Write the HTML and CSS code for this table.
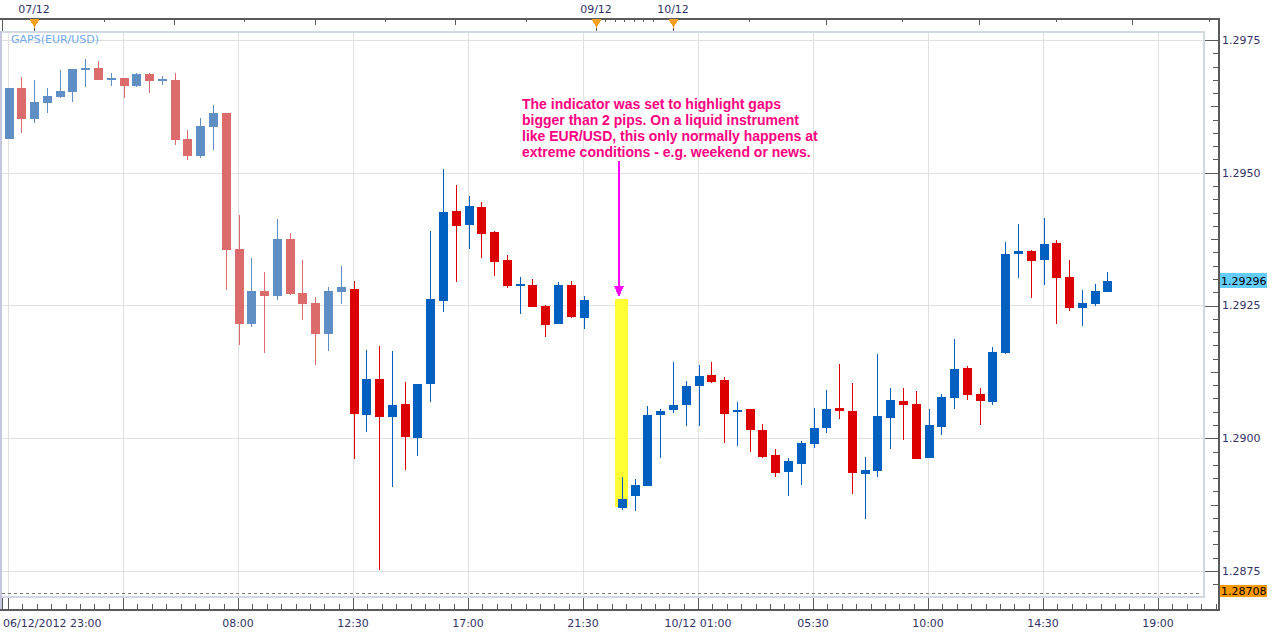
FILE: index.html
```html
<!DOCTYPE html>
<html lang="en">
<head>
<meta charset="utf-8">
<title>GAPS(EUR/USD)</title>
<link rel="stylesheet" href="styles.css">
</head>
<body>
<div class="chart">
  <svg class="top-axis" width="1275" height="31" viewBox="0 0 1275 31" shape-rendering="crispEdges">
    <rect x="0" y="18" width="1220" height="2" fill="#5a5a5a"/>
    <rect x="2" y="18" width="1" height="13" fill="#5a5a5a"/>
    <rect x="1218" y="18" width="2" height="13" fill="#5a5a5a"/>
    <g fill="#5a5a5a">
      <rect x="174" y="20" width="1" height="5"/>
      <rect x="315" y="20" width="1" height="5"/>
      <rect x="455" y="20" width="1" height="5"/>
      <rect x="826" y="20" width="1" height="5"/>
      <rect x="979" y="20" width="1" height="5"/>
      <rect x="1132" y="20" width="1" height="5"/>
      <rect x="104" y="20" width="1" height="2"/>
      <rect x="244" y="20" width="1" height="2"/>
      <rect x="385" y="20" width="1" height="2"/>
      <rect x="526" y="20" width="1" height="2"/>
      <rect x="605" y="20" width="1" height="2"/>
      <rect x="615" y="20" width="1" height="2"/>
      <rect x="624" y="20" width="1" height="2"/>
      <rect x="634" y="20" width="1" height="2"/>
      <rect x="643" y="20" width="1" height="2"/>
      <rect x="653" y="20" width="1" height="2"/>
      <rect x="749" y="20" width="1" height="2"/>
      <rect x="902" y="20" width="1" height="2"/>
      <rect x="1056" y="20" width="1" height="2"/>
      <rect x="1209" y="20" width="1" height="2"/>
      <rect x="34" y="20" width="1" height="11"/>
      <rect x="596" y="20" width="1" height="11"/>
      <rect x="673" y="20" width="1" height="11"/>
    </g>
    <g class="marker">
      <polygon points="29.5,19 39.5,19 34.5,28"/>
      <polygon points="591.5,19 601.5,19 596.5,28"/>
      <polygon points="668.5,19 678.5,19 673.5,28"/>
    </g>
    <text class="axis-label" x="34" y="13" text-anchor="middle">07/12</text>
    <text class="axis-label" x="596" y="13" text-anchor="middle">09/12</text>
    <text class="axis-label" x="673" y="13" text-anchor="middle">10/12</text>
  </svg>

  <div class="middle">
    <div class="plot">
      <svg id="plot" width="1205" height="567" viewBox="0 31 1205 567" shape-rendering="crispEdges">
        <rect x="0" y="31" width="1205" height="567" fill="#ffffff"/>
        <g fill="#e1e1e1">
          <rect x="2" y="40" width="1201" height="1"/>
          <rect x="2" y="173" width="1201" height="1"/>
          <rect x="2" y="305" width="1201" height="1"/>
          <rect x="2" y="438" width="1201" height="1"/>
          <rect x="2" y="571" width="1201" height="1"/>
          <rect x="8" y="33" width="1" height="563"/>
          <rect x="123" y="33" width="1" height="563"/>
          <rect x="238" y="33" width="1" height="563"/>
          <rect x="353" y="33" width="1" height="563"/>
          <rect x="468" y="33" width="1" height="563"/>
          <rect x="583" y="33" width="1" height="563"/>
          <rect x="698" y="33" width="1" height="563"/>
          <rect x="813" y="33" width="1" height="563"/>
          <rect x="928" y="33" width="1" height="563"/>
          <rect x="1043" y="33" width="1" height="563"/>
          <rect x="1158" y="33" width="1" height="563"/>
        </g>
        <line x1="2" y1="593.5" x2="1200" y2="593.5" stroke="#7a7a7a" stroke-width="1" stroke-dasharray="3 3"/>
        <g fill="#d3d9e2">
          <rect x="0" y="31" width="1205" height="2"/>
          <rect x="1203" y="31" width="2" height="567"/>
          <rect x="0" y="596" width="1205" height="2"/>
        </g>
        <rect x="0" y="31" width="2" height="567" fill="#c6c6de"/>
        <text class="legend" x="11" y="43">GAPS(EUR/USD)</text>
        <rect x="615" y="299" width="13" height="208" fill="#ffff33"/>
        <g id="candles"></g>
        <rect x="618" y="161" width="2" height="127" fill="#ff00ff"/>
        <polygon points="614,286 624,286 619,297" fill="#ff00ff"/>
      </svg>
      <p class="note">The indicator was set to highlight gaps<br>bigger than 2 pips. On a liquid instrument<br>like EUR/USD, this only normally happens at<br>extreme conditions - e.g. weekend or news.</p>
    </div>

    <svg id="price" width="70" height="567" viewBox="1205 31 70 567" shape-rendering="crispEdges">
      <rect x="1218" y="31" width="2" height="567" fill="#5a5a5a"/>
      <g id="price-ticks" fill="#5a5a5a"></g>
      <text class="axis-label" x="1222" y="44">1.2975</text>
      <text class="axis-label" x="1222" y="177">1.2950</text>
      <text class="axis-label" x="1222" y="309">1.2925</text>
      <text class="axis-label" x="1222" y="442">1.2900</text>
      <text class="axis-label" x="1222" y="575">1.2875</text>
      <rect x="1220" y="273" width="47" height="15" fill="#66ccff"/>
      <text class="axis-label tag-text" x="1221" y="285">1.29296</text>
      <rect x="1220" y="585" width="47" height="12" fill="#ff9900"/>
      <text class="axis-label tag-text" x="1221" y="595">1.28708</text>
    </svg>
  </div>

  <svg id="time" width="1275" height="36" viewBox="0 598 1275 36" shape-rendering="crispEdges">
    <rect x="0" y="598" width="2" height="12" fill="#c6c6de"/>
    <rect x="0" y="609" width="1220" height="2" fill="#5a5a5a"/>
    <rect x="1218" y="598" width="2" height="13" fill="#5a5a5a"/>
    <g id="time-ticks" fill="#5a5a5a"></g>
    <text class="axis-label" x="3" y="627">06/12/2012 23:00</text>
    <text class="axis-label" x="238" y="627" text-anchor="middle">08:00</text>
    <text class="axis-label" x="353" y="627" text-anchor="middle">12:30</text>
    <text class="axis-label" x="468" y="627" text-anchor="middle">17:00</text>
    <text class="axis-label" x="583" y="627" text-anchor="middle">21:30</text>
    <text class="axis-label" x="698" y="627" text-anchor="middle">10/12 01:00</text>
    <text class="axis-label" x="813" y="627" text-anchor="middle">05:30</text>
    <text class="axis-label" x="928" y="627" text-anchor="middle">10:00</text>
    <text class="axis-label" x="1043" y="627" text-anchor="middle">14:30</text>
    <text class="axis-label" x="1158" y="627" text-anchor="middle">19:00</text>
  </svg>
</div>
<script src="script.js"></script>
</body>
</html>
```

FILE: styles.css
```css
html, body {
  margin: 0;
  padding: 0;
  background: #ffffff;
}

body {
  width: 1275px;
  height: 634px;
  overflow: hidden;
  font-family: "DejaVu Sans", sans-serif;
}

.chart {
  display: flex;
  flex-direction: column;
  width: 1275px;
  height: 634px;
}

.chart svg {
  display: block;
  flex: none;
}

.middle {
  display: flex;
  height: 567px;
}

.plot {
  position: relative;
  width: 1205px;
  height: 567px;
  flex: none;
}

.note {
  position: absolute;
  left: 522px;
  top: 65px;
  margin: 0;
  font-family: "Liberation Sans", Arial, sans-serif;
  font-weight: bold;
  font-size: 14px;
  line-height: 16px;
  color: #ff0080;
  white-space: nowrap;
}

.axis-label {
  font-family: "DejaVu Sans", sans-serif;
  font-size: 11px;
  fill: #333366;
}

.tag-text {
  fill: #000000;
}

.legend {
  font-family: "DejaVu Sans", sans-serif;
  font-size: 11px;
  fill: #72aaee;
}

.marker polygon {
  fill: #f5a020;
}
```

FILE: script.js
```js
(function () {
  var NS = 'http://www.w3.org/2000/svg';

  function rect(parent, x, y, w, h, fill) {
    var r = document.createElementNS(NS, 'rect');
    r.setAttribute('x', x);
    r.setAttribute('y', y);
    r.setAttribute('width', w);
    r.setAttribute('height', h);
    if (fill) { r.setAttribute('fill', fill); }
    parent.appendChild(r);
    return r;
  }

  var colors = { fb: '#5f8fc4', fr: '#dc6c6c', b: '#0060c0', r: '#dd0000' };

  // [bodyLeft, bodyTop, bodyBottom, wickTop, wickBottom, colour]
  var data = [
    [5, 88, 139, 88, 139, 'fb'],
    [17, 88, 119, 77, 133, 'fr'],
    [30, 102, 119, 80, 123, 'fb'],
    [43, 96, 103, 88, 113, 'fb'],
    [56, 91, 97, 70, 98, 'fb'],
    [68, 69, 92, 69, 102, 'fb'],
    [81, 68, 70, 59, 87, 'fb'],
    [94, 68, 80, 61, 80, 'fr'],
    [107, 78, 80, 73, 86, 'fb'],
    [120, 78, 86, 78, 98, 'fr'],
    [132, 74, 86, 73, 87, 'fb'],
    [145, 74, 81, 73, 93, 'fr'],
    [158, 79, 81, 76, 85, 'fb'],
    [171, 80, 140, 73, 145, 'fr'],
    [183, 139, 156, 130, 160, 'fr'],
    [196, 126, 156, 118, 158, 'fb'],
    [209, 113, 127, 105, 150, 'fb'],
    [222, 113, 250, 113, 290, 'fr'],
    [235, 249, 324, 215, 345, 'fr'],
    [247, 291, 324, 258, 327, 'fb'],
    [260, 291, 296, 272, 353, 'fr'],
    [273, 239, 296, 219, 300, 'fb'],
    [286, 239, 294, 233, 295, 'fr'],
    [298, 293, 304, 260, 320, 'fr'],
    [311, 303, 334, 297, 365, 'fr'],
    [324, 291, 334, 287, 351, 'fb'],
    [337, 287, 292, 266, 304, 'fb'],
    [350, 289, 414, 281, 459, 'r'],
    [362, 379, 415, 350, 432, 'b'],
    [375, 379, 417, 346, 570, 'r'],
    [388, 405, 417, 351, 487, 'b'],
    [401, 404, 437, 382, 470, 'r'],
    [413, 384, 438, 384, 456, 'b'],
    [426, 299, 384, 231, 402, 'b'],
    [439, 212, 301, 169, 312, 'b'],
    [452, 211, 226, 185, 282, 'r'],
    [465, 206, 225, 196, 249, 'b'],
    [477, 207, 234, 202, 258, 'r'],
    [490, 232, 262, 231, 276, 'r'],
    [503, 260, 286, 255, 288, 'r'],
    [516, 284, 286, 277, 314, 'b'],
    [528, 285, 307, 279, 307, 'r'],
    [541, 306, 325, 305, 337, 'r'],
    [554, 285, 324, 282, 324, 'b'],
    [567, 285, 317, 281, 318, 'r'],
    [580, 300, 318, 296, 329, 'b'],
    [618, 499, 508, 477, 510, 'b'],
    [631, 485, 496, 479, 511, 'b'],
    [643, 415, 486, 406, 486, 'b'],
    [656, 411, 415, 409, 458, 'b'],
    [669, 405, 410, 362, 413, 'b'],
    [682, 386, 405, 381, 426, 'b'],
    [695, 376, 386, 365, 426, 'b'],
    [707, 375, 382, 362, 383, 'r'],
    [720, 380, 414, 377, 443, 'r'],
    [733, 410, 412, 402, 446, 'b'],
    [746, 409, 430, 409, 452, 'r'],
    [758, 430, 457, 424, 458, 'r'],
    [771, 455, 473, 449, 477, 'r'],
    [784, 461, 472, 458, 496, 'b'],
    [797, 443, 464, 441, 485, 'b'],
    [810, 428, 444, 408, 448, 'b'],
    [822, 409, 428, 390, 433, 'b'],
    [835, 408, 411, 364, 419, 'r'],
    [848, 411, 473, 383, 494, 'r'],
    [861, 470, 474, 457, 519, 'b'],
    [873, 416, 471, 354, 477, 'b'],
    [886, 400, 418, 388, 449, 'b'],
    [899, 401, 405, 388, 440, 'r'],
    [912, 404, 459, 391, 459, 'r'],
    [925, 425, 458, 409, 458, 'b'],
    [937, 397, 427, 394, 435, 'b'],
    [950, 369, 398, 339, 409, 'b'],
    [963, 368, 395, 366, 400, 'r'],
    [976, 394, 401, 388, 425, 'r'],
    [988, 352, 402, 347, 405, 'b'],
    [1001, 254, 353, 242, 354, 'b'],
    [1014, 251, 254, 224, 278, 'b'],
    [1027, 251, 261, 250, 298, 'r'],
    [1040, 244, 260, 218, 285, 'b'],
    [1052, 243, 278, 240, 324, 'r'],
    [1065, 277, 308, 260, 311, 'r'],
    [1078, 303, 308, 290, 326, 'b'],
    [1091, 291, 304, 284, 306, 'b'],
    [1103, 281, 292, 272, 281, 'b']
  ];

  var g = document.getElementById('candles');
  if (g) {
    data.forEach(function (c) {
      var col = colors[c[5]];
      if (c[4] > c[3]) { rect(g, c[0] + 4, c[3], 1, c[4] - c[3], col); }
      var h = Math.max(c[2] - c[1], 2);
      rect(g, c[0], c[1], 9, h, col);
    });
  }

  var pt = document.getElementById('price-ticks');
  if (pt) {
    for (var k = 0; k <= 41; k++) {
      var y = Math.round(40 + k * 13.275);
      var x0 = (k % 10 === 0) ? 1205 : ((k % 5 === 0) ? 1211 : 1213);
      rect(pt, x0, y, 1218 - x0, 1);
    }
  }

  var tt = document.getElementById('time-ticks');
  if (tt) {
    rect(tt, 2, 598, 1, 11);
    for (var i = 0; i < 200; i++) {
      var x = Math.round(8 + i * 14.375);
      if (x > 1217) { break; }
      var major = (i % 8 === 0);
      rect(tt, x, major ? 598 : 604, 1, major ? 11 : 5);
    }
  }
})();
```
